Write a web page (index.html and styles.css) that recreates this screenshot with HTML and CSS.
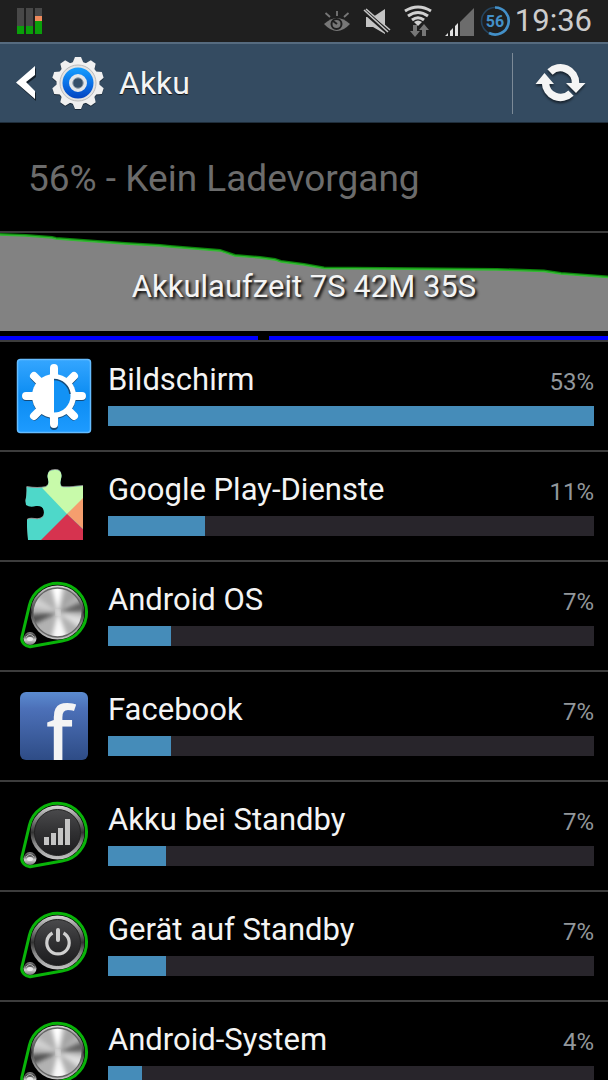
FILE: index.html
```
<!DOCTYPE html>
<html lang="de">
<head>
  <meta charset="UTF-8">
  <meta name="viewport" content="width=device-width, initial-scale=1">
  <title>Akku</title>
  <link rel="stylesheet" href="styles.css">
</head>
<body>
  <!-- Shared icon parts -->
  <svg class="defs" width="0" height="0" aria-hidden="true">
    <defs>
      <linearGradient id="rim" x1="0" y1="0" x2="0" y2="1">
        <stop offset="0" stop-color="#d8d8d8"/>
        <stop offset="0.3" stop-color="#777"/>
        <stop offset="0.5" stop-color="#333"/>
        <stop offset="0.7" stop-color="#888"/>
        <stop offset="1" stop-color="#c4c4c4"/>
      </linearGradient>
      <linearGradient id="dark" x1="0" y1="0" x2="0" y2="1">
        <stop offset="0" stop-color="#4a4a4c"/>
        <stop offset="0.5" stop-color="#303032"/>
        <stop offset="1" stop-color="#1c1c1e"/>
      </linearGradient>
      <linearGradient id="ball" x1="0" y1="0" x2="0" y2="1">
        <stop offset="0" stop-color="#8c8c8c"/>
        <stop offset="0.25" stop-color="#444"/>
        <stop offset="0.6" stop-color="#d0d0d0"/>
        <stop offset="1" stop-color="#777"/>
      </linearGradient>
      <linearGradient id="sky" x1="0" y1="0" x2="0" y2="1">
        <stop offset="0" stop-color="#35a6ff"/>
        <stop offset="0.5" stop-color="#0b8cf2"/>
        <stop offset="1" stop-color="#1e9bff"/>
      </linearGradient>
      <linearGradient id="fb" x1="0" y1="0" x2="0" y2="1">
        <stop offset="0" stop-color="#5b8bd0"/>
        <stop offset="0.25" stop-color="#4c70b8"/>
        <stop offset="1" stop-color="#2e4c86"/>
      </linearGradient>
      <linearGradient id="gearBlue" x1="0" y1="0" x2="0" y2="1">
        <stop offset="0" stop-color="#16a0ff"/>
        <stop offset="0.5" stop-color="#0a72e8"/>
        <stop offset="1" stop-color="#0444c0"/>
      </linearGradient>
      <filter id="soft"><feGaussianBlur stdDeviation="2.2"/></filter>
      <clipPath id="disc"><circle cx="41.500" cy="34.500" r="24.500"/></clipPath>

      <symbol id="pulley" viewBox="0 0 76 76">
        <path d="M46 63 L15.400 68.500 A8.200 8.200 0 0 1 6 58.500 L13.400 27.400 A29 29 0 1 1 46 63 Z" fill="#000" stroke="#09b409" stroke-width="3"/>
        <circle cx="41.500" cy="34.500" r="27" fill="url(#rim)"/>
        <circle cx="14" cy="60.500" r="6.500" fill="url(#ball)"/>
        <path d="M10 59Q14 54 18 59" fill="none" stroke="#b0b0b0"/>
        <ellipse cx="14" cy="61" rx="3" ry="2" fill="#e8e8e8"/>
      </symbol>
      <symbol id="metal" viewBox="0 0 76 76">
        <use href="#pulley"/>
        <g clip-path="url(#disc)">
          <rect x="16" y="8" width="52" height="53" fill="#b2b2b2"/>
          <g filter="url(#soft)">
            <path d="M42 34.500L34 4H48Z" fill="#fff"/>
            <path d="M42 34.500L34 66H54Z" fill="#f8f8f8"/>
            <path d="M42 34.500L10 37L12 49Z" fill="#505050"/>
            <path d="M42 34.500L74 20V33Z" fill="#606060"/>
            <path d="M42 34.500L74 40L69 54Z" fill="#dedede"/>
            <path d="M42 34.500L14 14L13 28Z" fill="#d0d0d0"/>
            <path d="M42 34.500L54 6L66 12Z" fill="#a4a4a4"/>
          </g>
          <circle cx="42" cy="34.500" r="2.500" fill="#eee" filter="url(#soft)"/>
        </g>
        <circle cx="41.500" cy="34.500" r="24.500" fill="none" stroke="#666" stroke-width="1.300"/>
      </symbol>
    </defs>
  </svg>

  <div class="status-bar">
    <svg class="meter" width="28" height="28" viewBox="0 0 28 28" aria-hidden="true">
      <path d="M1 1h7v26H1zM10 1h7v26h-7zM19 1h7v26h-7z" fill="#484848"/>
      <path d="M1 19h7v8H1zM10 19h7v8h-7zM19 14h7v13h-7z" fill="#0a9f0a"/>
      <path d="M19 9h7v5h-7z" fill="#ee8a5c"/>
    </svg>
    <div class="status-icons">
      <svg width="28" height="32" viewBox="0 0 28 32" aria-hidden="true">
        <path d="M1 19Q14 7 27 19Q14 33 1 19Z" fill="#777"/>
        <path d="M14 11V6M7 12L2.500 8M21 12L25.500 8" stroke="#777" stroke-width="1.800"/>
        <circle cx="13.500" cy="19" r="5" fill="#777" stroke="#1f1f1f" stroke-width="2"/>
        <path d="M14 19L10 16" stroke="#1f1f1f" stroke-width="2"/>
      </svg>
      <svg width="28" height="32" viewBox="0 0 28 32" aria-hidden="true">
        <path d="M3 12h7L22 4v25L10 22H3z" fill="#c4c4c4"/>
        <path d="M-1 4L26 28" stroke="#1f1f1f" stroke-width="5"/>
        <path d="M1 5L25 27M3 4L27 25" stroke="#c4c4c4" stroke-width="1.600"/>
      </svg>
      <svg width="30" height="32" viewBox="0 0 30 32" aria-hidden="true">
        <g fill="none" stroke="#d0d0d0" stroke-width="3">
          <path d="M2 6Q15 -2 28 6"/>
          <path d="M5 11Q15 4 25 11"/>
          <path d="M9 15Q15 10.500 21 15"/>
        </g>
        <path d="M11 17Q15 14 19 17L15 21Z" fill="#d0d0d0"/>
        <path d="M10 20h4v6h3l-5 6l-5-6h3zM19 31h4v-6h3l-5-6l-5 6h3z" fill="#777"/>
      </svg>
      <svg width="30" height="30" viewBox="0 0 30 30" aria-hidden="true">
        <path d="M15 16L29 2V30H15Z" fill="#6c6c6c"/>
        <path d="M0 30L3 27V30ZM5 25L8 22V30H5ZM10 20L13 17V30H10Z" fill="#e0e0e0"/>
      </svg>
      <svg width="30" height="30" viewBox="0 0 30 30" aria-label="56">
        <circle cx="15" cy="15" r="13.500" fill="none" stroke="#25445f" stroke-width="1.600"/>
        <path d="M15 1.500A13.500 13.500 0 1 1 9 27" fill="none" stroke="#4390c8" stroke-width="2.600"/>
        <text x="15" y="21" text-anchor="middle" class="ring-text">56</text>
      </svg>
    </div>
    <span class="clock">19:36</span>
  </div>

  <header class="action-bar">
    <button class="back" type="button" aria-label="Zurück">
      <svg width="20" height="36" viewBox="0 0 20 36">
        <path d="M20 3V12L11 19L20 28V36L2 20Z" fill="#15202b"/>
        <path d="M19 1V10L10 17L19 26V34L0 17.500Z" fill="#fff"/>
      </svg>
      <svg class="gear" width="54" height="54" viewBox="-27 -27 54 54">
        <defs>
          <path id="tooth" d="M-5.500 -20L-3 -26H3L5.500 -20Z"/>
          <g id="teeth">
            <use href="#tooth"/>
            <use href="#tooth" transform="rotate(36)"/>
            <use href="#tooth" transform="rotate(72)"/>
            <use href="#tooth" transform="rotate(108)"/>
            <use href="#tooth" transform="rotate(144)"/>
            <use href="#tooth" transform="rotate(180)"/>
            <use href="#tooth" transform="rotate(216)"/>
            <use href="#tooth" transform="rotate(252)"/>
            <use href="#tooth" transform="rotate(288)"/>
            <use href="#tooth" transform="rotate(324)"/>
            <circle r="21.500"/>
          </g>
        </defs>
        <use href="#teeth" y="1" fill="#1c2a37"/>
        <use href="#teeth" fill="#f0f0f0"/>
        <circle r="18" fill="#e4e4e4" stroke="#bbb"/>
        <circle r="15.500" fill="url(#gearBlue)"/>
        <circle r="7" fill="none" stroke="#e2e6ea" stroke-width="4"/>
        <circle r="5.200" fill="#35506b" stroke="#8b98a5"/>
      </svg>
    </button>
    <h1>Akku</h1>
    <button class="refresh" type="button" aria-label="Aktualisieren">
      <svg width="52" height="44" viewBox="534 61 52 44">
        <path d="M550 72A15 15 0 0 1 575.500 83M571 93.100A15 15 0 0 1 545.500 82.500" fill="none" stroke="#f5f5f5" stroke-width="7.500"/>
        <path d="M535.500 84L544.500 73L554 84ZM566 83H585.500L576 93Z" fill="#f5f5f5"/>
      </svg>
    </button>
  </header>

  <main>
    <p class="summary">56% - Kein Ladevorgang</p>

    <section class="history">
      <svg class="graph" viewBox="0 0 608 98" preserveAspectRatio="none" aria-hidden="true">
        <path d="M0 1L26 2L52 4L56 5L125 10L160 12L170 13L220 17L235 22L260 24L275 26L281 28L304 31L324 34.500L497 36L544 37.500L561 40L608 43.500V98H0Z" fill="#828282"/>
        <path d="M0 1L26 2L52 4L56 5L125 10L160 12L170 13L220 17L235 22L260 24L275 26L281 28L304 31L324 34.500L497 36L544 37.500L561 40L608 43.500" fill="none" stroke="#0b850b" stroke-width="2"/>
        <path d="M0 2L26 3L52 5L56 6L125 11L160 13L170 14L220 18L235 23L260 25L275 27L281 29L304 32L324 35.500L497 37L544 38.500L561 41L608 44.500" fill="none" stroke="#32b932" stroke-width="1.300"/>
      </svg>
      <p class="runtime">Akkulaufzeit 7S 42M 35S</p>
    </section>
    <div class="usage-line"><span></span><span></span></div>

    <ul class="apps">
      <li>
        <svg class="icon" viewBox="0 0 76 76" aria-hidden="true">
          <rect x="1.500" y="1.500" width="73" height="73" rx="3" fill="url(#sky)" stroke="#65bcff" stroke-width="1.500"/>
          <g stroke-linecap="round" stroke-width="8">
            <path d="M38 11V68M10 39H66M18.500 19.500L57.500 58.500M57.500 19.500L18.500 58.500" stroke="#174b78"/>
            <circle cx="38" cy="39" r="22" fill="#174b78"/>
            <path d="M38 10V66M10 38H66M18 18L58 58M58 18L18 58" stroke="#fff"/>
            <circle cx="38" cy="38" r="22" fill="#fff"/>
          </g>
          <path d="M38 21.500A16.500 16.500 0 0 1 38 54.500Z" fill="#1292f5"/>
          <path d="M38 21.500A16.500 16.500 0 0 1 54 36" fill="none" stroke="#174b78" stroke-width="1.500"/>
        </svg>
        <div class="info">
          <h2>Bildschirm</h2><span class="percent">53%</span>
          <div class="bar"><div style="width: 100%"></div></div>
        </div>
      </li>
      <li>
        <svg class="icon" viewBox="0 0 76 76" aria-hidden="true">
          <defs>
            <path id="piece" d="M10.500 19Q22 21 30 19Q34 17 32 11Q30 2 39 2Q47 2 45 11Q43 17 46 19Q50 20 67 18V72H12L11 58V52Q13 50 19 51Q28 52 28 45Q28 37 20 38Q14 40 10 37L9.500 33Q11 27 10.500 19Z"/>
            <clipPath id="pieceClip"><use href="#piece"/></clipPath>
          </defs>
          <use href="#piece" y="-1" fill="#909090"/>
          <g clip-path="url(#pieceClip)">
            <path d="M0 0H76V76H0Z" fill="#4ed8c9"/>
            <path d="M9 2H70V29L51 46Z" fill="#c8faaa"/>
            <path d="M51 46L68 29V62Z" fill="#f59e6e"/>
            <path d="M51 46L76 70V76H21Z" fill="#d6334f"/>
          </g>
        </svg>
        <div class="info">
          <h2>Google Play-Dienste</h2><span class="percent">11%</span>
          <div class="bar"><div style="width: 20%"></div></div>
        </div>
      </li>
      <li>
        <svg class="icon" viewBox="0 0 76 76" aria-hidden="true"><use href="#metal"/></svg>
        <div class="info">
          <h2>Android OS</h2><span class="percent">7%</span>
          <div class="bar"><div style="width: 13%"></div></div>
        </div>
      </li>
      <li>
        <svg class="icon" viewBox="0 0 76 76" aria-hidden="true">
          <rect x="4" y="4" width="68" height="68" rx="6" fill="url(#fb)"/>
          <text x="30" y="72" class="fb-letter">f</text>
        </svg>
        <div class="info">
          <h2>Facebook</h2><span class="percent">7%</span>
          <div class="bar"><div style="width: 13%"></div></div>
        </div>
      </li>
      <li>
        <svg class="icon" viewBox="0 0 76 76" aria-hidden="true">
          <use href="#pulley"/>
          <circle cx="41.500" cy="34.500" r="23" fill="url(#dark)" stroke="#222"/>
          <path d="M28 39h5v8h-5zM35 35h5v12h-5zM42 30h5v17h-5zM49 21h5v26h-5z" fill="#c4c4c4"/>
        </svg>
        <div class="info">
          <h2>Akku bei Standby</h2><span class="percent">7%</span>
          <div class="bar"><div style="width: 12%"></div></div>
        </div>
      </li>
      <li>
        <svg class="icon" viewBox="0 0 76 76" aria-hidden="true">
          <use href="#pulley"/>
          <circle cx="41.500" cy="34.500" r="23" fill="url(#dark)" stroke="#222"/>
          <path d="M36.500 25A11.200 11.200 0 1 0 47.500 25" fill="none" stroke="#d0d0d0" stroke-width="3.200"/>
          <path d="M42 22V32" stroke="#d0d0d0" stroke-width="4" stroke-linecap="round"/>
        </svg>
        <div class="info">
          <h2>Gerät auf Standby</h2><span class="percent">7%</span>
          <div class="bar"><div style="width: 12%"></div></div>
        </div>
      </li>
      <li>
        <svg class="icon" viewBox="0 0 76 76" aria-hidden="true"><use href="#metal"/></svg>
        <div class="info">
          <h2>Android-System</h2><span class="percent">4%</span>
          <div class="bar"><div style="width: 7%"></div></div>
        </div>
      </li>
    </ul>
  </main>
</body>
</html>
```
FILE: styles.css
```
* {
  box-sizing: border-box;
}

body {
  margin: 0;
  height: 100vh;
  display: flex;
  flex-direction: column;
  overflow: hidden;
  background-color: #000;
  color: #f4f4f4;
  font-family: Roboto, sans-serif;
}

h1, h2, p, ul {
  margin: 0;
  padding: 0;
  font-weight: 400;
}

button {
  border: none;
  padding: 0;
  background: none;
  color: inherit;
  cursor: pointer;
}

svg {
  display: block;
  flex: none;
}

.defs {
  position: absolute;
}

/* Status bar */
.status-bar {
  flex: none;
  height: 42px;
  padding: 0 16px;
  display: flex;
  align-items: center;
  background-color: #1f1f1f;
}

.status-icons {
  margin-left: auto;
  display: flex;
  align-items: center;
  gap: 12px;
}

.status-icons svg:last-child {
  margin-left: -7px;
}

.ring-text {
  fill: #4390c8;
  font-size: 16px;
  font-weight: 700;
}

.clock {
  margin-left: 5px;
  color: #ccc;
  font-size: 31px;
  line-height: 42px;
}

/* Action bar */
.action-bar {
  flex: none;
  height: 81px;
  padding: 0 22px 0 16px;
  display: flex;
  align-items: center;
  background-color: #344b61;
  border-top: 2px solid #566b7f;
  border-bottom: 1px solid #1f2d3a;
}

.back {
  display: flex;
  align-items: center;
  gap: 15px;
}

h1 {
  flex: 1;
  margin-left: 14px;
  font-size: 32px;
  line-height: 40px;
  text-shadow: 0 1px 1px #111;
}

.refresh {
  height: 61px;
  padding-left: 21px;
  border-left: 1px solid #7c8a97;
}

.refresh svg {
  filter: drop-shadow(0 2px 1px #17222d);
}

/* Content */
main {
  flex: 1;
  min-height: 0;
  overflow-y: auto;
  scrollbar-width: none;
}

.summary {
  height: 108px;
  padding: 0 28px;
  color: #6c6c6c;
  font-size: 37px;
  line-height: 112px;
}

.history {
  display: grid;
  border-top: 2px solid #3c3c3c;
}

.graph, .runtime {
  grid-area: 1 / 1;
}

.graph {
  width: 100%;
  height: 98px;
}

.runtime {
  padding-top: 34px;
  font-size: 31px;
  line-height: 40px;
  text-align: center;
  text-shadow: 2px 2px 3px #000;
}

.usage-line {
  height: 11px;
  padding-top: 5px;
  display: flex;
  gap: 11px;
  border-bottom: 2px solid #3c3c3c;
}

.usage-line span {
  flex: 340;
  height: 4px;
  background-color: #0000fe;
}

.usage-line span:first-child {
  flex: 258;
}

/* App list */
.apps {
  list-style: none;
}

.apps li {
  height: 110px;
  padding: 0 14px 0 16px;
  display: flex;
  align-items: center;
  gap: 16px;
  border-bottom: 2px solid #3c3c3c;
}

.icon {
  width: 76px;
  height: 76px;
  overflow: visible;
}

.info {
  flex: 1;
  padding-bottom: 6px;
  display: grid;
  grid-template-columns: 1fr auto;
  align-items: baseline;
  row-gap: 6px;
}

h2 {
  font-size: 31px;
  line-height: 40px;
}

.percent {
  color: #92979b;
  font-size: 24px;
}

.bar {
  grid-column: 1 / -1;
  height: 20px;
  background-color: #28252b;
}

.bar div {
  height: 100%;
  background-color: #458cb9;
}

.fb-letter {
  fill: #f4f4f4;
  font-family: "Open Sans", sans-serif;
  font-size: 74px;
  font-weight: 600;
}
```
